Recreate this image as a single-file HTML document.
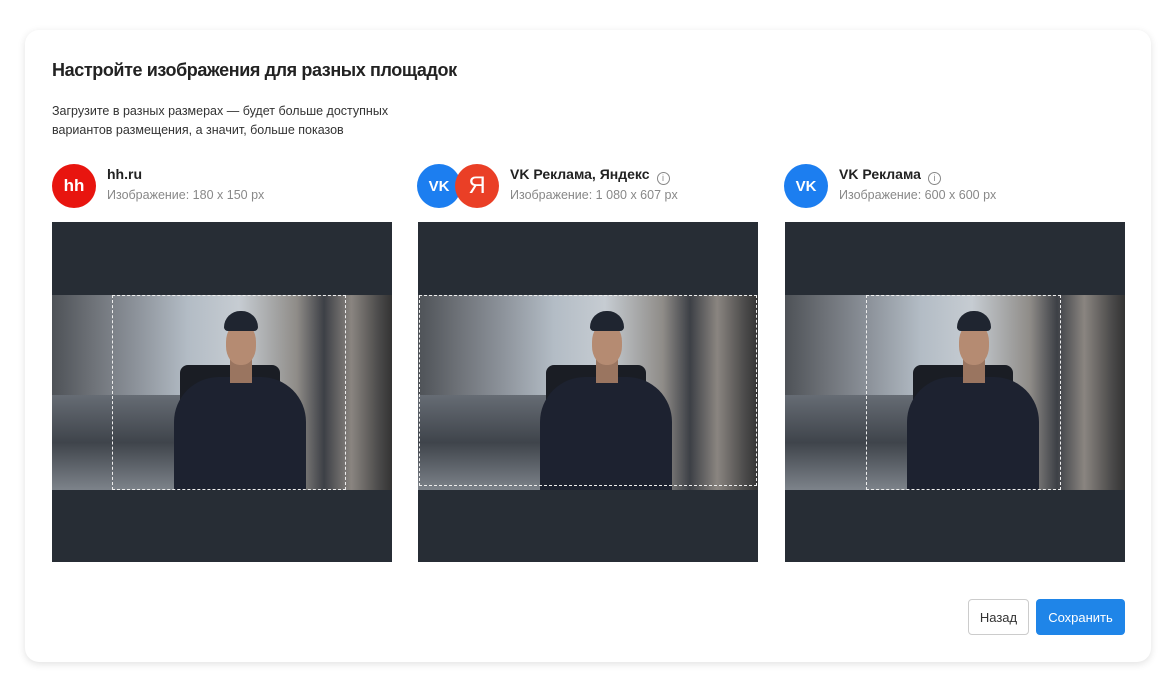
<!DOCTYPE html>
<html><head><meta charset="utf-8"><style>
*{margin:0;padding:0;box-sizing:border-box}
body{width:1176px;height:693px;background:#fff;font-family:"Liberation Sans",sans-serif;position:relative;overflow:hidden}
.card{position:absolute;left:25px;top:30px;width:1126px;height:632px;background:#fff;border-radius:14px;box-shadow:0 2px 8px rgba(0,0,0,.12)}
h1{position:absolute;left:52px;top:60px;font-size:18px;font-weight:bold;color:#222;letter-spacing:-.4px}
.sub{position:absolute;left:52px;top:102px;font-size:12.5px;line-height:19px;color:#333}
.hd{position:absolute;top:164px;height:44px}
.ic{position:absolute;top:0;width:44px;height:44px;border-radius:50%;color:#fff;font-weight:bold;display:flex;align-items:center;justify-content:center}
.t{position:absolute;font-size:14px;font-weight:bold;color:#222;top:2px;white-space:nowrap}
.s{position:absolute;font-size:12.5px;color:#888;top:24px;white-space:nowrap}
.info{display:inline-block;width:13px;height:13px;border:1.3px solid #888;border-radius:50%;font-size:9px;color:#888;text-align:center;line-height:11px;vertical-align:-2px;margin-left:7px;font-weight:normal}
.pan{position:absolute;top:222px;width:340px;height:340px;background:#272d35;overflow:hidden}
.ph{position:absolute;left:0;top:73px;width:340px;height:195px;background:linear-gradient(90deg,#4e5257 0%,#6e7278 12%,#8d939b 25%,#b3bcc5 40%,#c6ccd2 55%,#8f8c88 72%,#3d4046 80%,#8a8580 88%,#4c4b4b 96%,#333 100%);overflow:hidden}
.road{position:absolute;left:0;bottom:0;width:140px;height:95px;background:linear-gradient(180deg,#666c74,#3f444b 50%,#7d838a)}
.bag{position:absolute;left:128px;top:70px;width:100px;height:60px;background:#1a1d24;border-radius:8px}
.body{position:absolute;left:122px;top:82px;width:132px;height:120px;background:#1d2230;border-radius:45px 45px 0 0}
.neck{position:absolute;left:178px;top:60px;width:22px;height:28px;background:#9a7560}
.face{position:absolute;left:174px;top:28px;width:30px;height:42px;background:#b58b72;border-radius:45%}
.cap{position:absolute;left:172px;top:16px;width:34px;height:20px;background:#1f2530;border-radius:17px 17px 4px 4px}
.crop{position:absolute;top:73px;height:195px;border:1.5px dashed #eee}
.btn{position:absolute;top:599px;height:36px;border-radius:4px;font-size:13px;display:flex;align-items:center;justify-content:center}
</style></head><body>
<div class="card"></div>
<h1>Настройте изображения для разных площадок</h1>
<div class="sub">Загрузите в разных размерах — будет больше доступных<br>вариантов размещения, а значит, больше показов</div>

<div class="hd" style="left:52px"><div class="ic" style="left:0;background:#e8150f;font-size:17px">hh</div><div class="t" style="left:55px">hh.ru</div><div class="s" style="left:55px">Изображение: 180 x 150 px</div></div>
<div class="hd" style="left:417px"><div class="ic" style="left:0;background:#1c7ef0;font-size:15px">VK</div><div class="ic" style="left:38px;background:#ea3f26;font-size:24px;font-weight:normal;border:0">Я</div><div class="t" style="left:93px">VK Реклама, Яндекс<span class="info">i</span></div><div class="s" style="left:93px">Изображение: 1 080 x 607 px</div></div>
<div class="hd" style="left:784px"><div class="ic" style="left:0;background:#1c7ef0;font-size:15px">VK</div><div class="t" style="left:55px">VK Реклама<span class="info">i</span></div><div class="s" style="left:55px">Изображение: 600 x 600 px</div></div>

<div class="pan" style="left:52px"><div class="ph"><div class="road"></div><div class="bag"></div><div class="body"></div><div class="neck"></div><div class="face"></div><div class="cap"></div></div><div class="crop" style="left:60px;width:234px"></div></div>
<div class="pan" style="left:418px"><div class="ph"><div class="road"></div><div class="bag"></div><div class="body"></div><div class="neck"></div><div class="face"></div><div class="cap"></div></div><div class="crop" style="left:1px;width:338px;height:191px"></div></div>
<div class="pan" style="left:785px"><div class="ph"><div class="road"></div><div class="bag"></div><div class="body"></div><div class="neck"></div><div class="face"></div><div class="cap"></div></div><div class="crop" style="left:81px;width:195px"></div></div>

<div class="btn" style="left:968px;width:61px;border:1.5px solid #ccc;color:#333">Назад</div>
<div class="btn" style="left:1036px;width:89px;background:#1f85e8;color:#fff">Сохранить</div>
</body></html>
